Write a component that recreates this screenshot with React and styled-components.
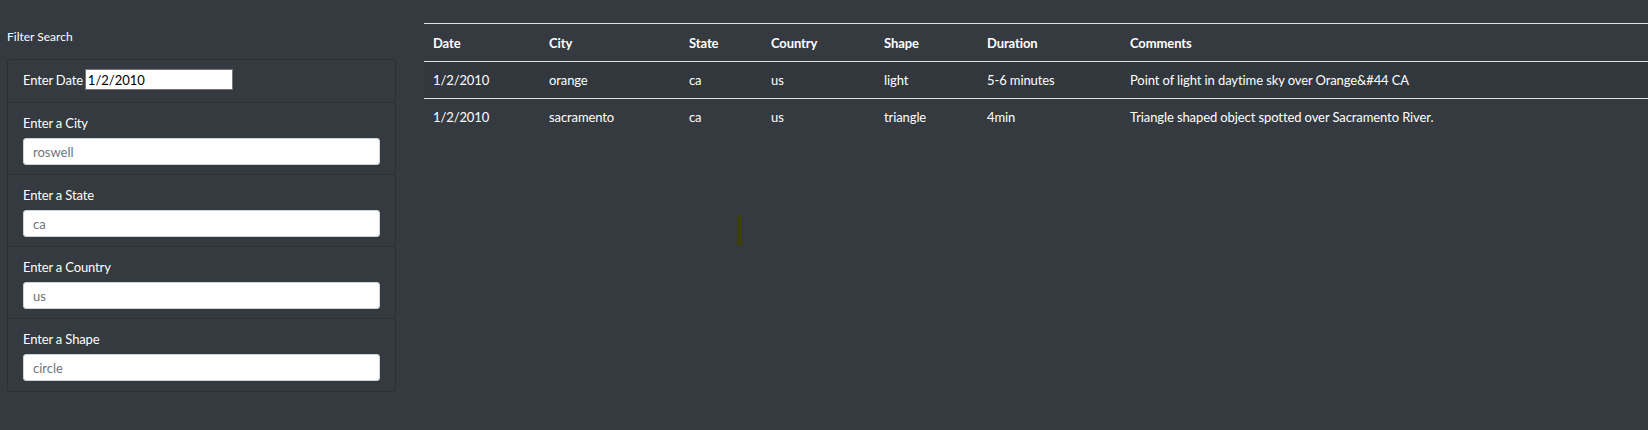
import styled, { createGlobalStyle } from 'styled-components';

const GlobalStyle = createGlobalStyle`
    html, body {
        margin: 0;
        padding: 0;
        background: #343a40;
        color: #fff;
        font-family: Lato, "Open Sans", sans-serif;
        font-size: 13px;
    }
`;

const Page = styled.div`
    display: flex;
    align-items: flex-start;
    padding-left: 7px;
    min-height: 430px;
    position: relative;
`;

const Sidebar = styled.aside`
    width: 389px;
    flex-shrink: 0;
    padding-top: 28px;
`;

const SidebarTitle = styled.div`
    font-size: 12px;
    line-height: 18px;
    margin-bottom: 13px;
`;

const FilterList = styled.ul`
    list-style: none;
    margin: 0;
    padding: 0;
    border: 1px solid #2b3035;
    border-radius: 3px;
`;

const FilterItem = styled.li`
    padding: ${({ inline }) => (inline ? '9px 15px 12px' : '11px 15px 9px')};
    border-top: ${({ first }) => (first ? 'none' : '1px solid #2b3035')};
    display: ${({ inline }) => (inline ? 'flex' : 'block')};
    align-items: center;
    gap: 2px;

    &:last-child {
        padding-bottom: 10px;
    }
`;

const Label = styled.label`
    display: block;
    font-size: 13px;
    line-height: 18px;
    letter-spacing: -0.15px;
    margin-bottom: ${({ inline }) => (inline ? '0' : '6px')};
`;

const DateInput = styled.input`
    width: 148px;
    height: 21px;
    box-sizing: border-box;
    border: 1px solid #767676;
    padding: 1px 2px;
    font-family: inherit;
    font-size: 13px;
    color: #000;
    background: #fff;
`;

const TextInput = styled.input`
    display: block;
    width: 100%;
    height: 27px;
    box-sizing: border-box;
    border: 1px solid #ced4da;
    border-radius: 3px;
    padding: 0 9px;
    font-family: inherit;
    font-size: 13px;
    background: #fff;

    &::placeholder {
        color: #6c757d;
    }
`;

const TableArea = styled.main`
    flex: 1;
    margin-left: 28px;
    padding-top: 23px;
`;

const Table = styled.table`
    width: 100%;
    border-collapse: collapse;
    table-layout: fixed;
    font-size: 13px;
    letter-spacing: -0.1px;
    color: #fff;
`;

const HeadCell = styled.th`
    text-align: left;
    font-weight: 700;
    padding: 1px 9px 0;
    height: 36px;
    border-top: 1px solid #dee2e6;
    border-bottom: 1px solid #dee2e6;
`;

const Row = styled.tr`
    background: ${({ striped }) => (striped ? 'rgba(0, 0, 0, 0.05)' : 'transparent')};
    border-bottom: ${({ last }) => (last ? 'none' : '1px solid #dee2e6')};
`;

const Cell = styled.td`
    padding: 0 9px;
    height: 36px;
    white-space: nowrap;
`;

const StrayBar = styled.div`
    position: absolute;
    left: 737px;
    top: 215px;
    width: 5px;
    height: 30px;
    background: #3d4100;
`;

const columns = [
    { key: 'date', label: 'Date', width: 116 },
    { key: 'city', label: 'City', width: 140 },
    { key: 'state', label: 'State', width: 82 },
    { key: 'country', label: 'Country', width: 113 },
    { key: 'shape', label: 'Shape', width: 103 },
    { key: 'duration', label: 'Duration', width: 143 },
    { key: 'comments', label: 'Comments' },
];

const sightings = [
    {
        date: '1/2/2010',
        city: 'orange',
        state: 'ca',
        country: 'us',
        shape: 'light',
        duration: '5-6 minutes',
        comments: 'Point of light in daytime sky over Orange&#44 CA',
    },
    {
        date: '1/2/2010',
        city: 'sacramento',
        state: 'ca',
        country: 'us',
        shape: 'triangle',
        duration: '4min',
        comments: 'Triangle shaped object spotted over Sacramento River.',
    },
];

const filters = [
    { id: 'city', label: 'Enter a City', placeholder: 'roswell' },
    { id: 'state', label: 'Enter a State', placeholder: 'ca' },
    { id: 'country', label: 'Enter a Country', placeholder: 'us' },
    { id: 'shape', label: 'Enter a Shape', placeholder: 'circle' },
];

const App = () => (
    <>
        <GlobalStyle />
        <Page>
            <Sidebar>
                <SidebarTitle>Filter Search</SidebarTitle>
                <FilterList>
                    <FilterItem first inline>
                        <Label inline htmlFor="datetime">Enter Date</Label>
                        <DateInput id="datetime" type="text" defaultValue="1/2/2010" />
                    </FilterItem>
                    {filters.map((f) => (
                        <FilterItem key={f.id}>
                            <Label htmlFor={f.id}>{f.label}</Label>
                            <TextInput id={f.id} type="text" placeholder={f.placeholder} />
                        </FilterItem>
                    ))}
                </FilterList>
            </Sidebar>
            <TableArea>
                <Table>
                    <colgroup>
                        {columns.map((c) => (
                            <col key={c.key} style={c.width ? { width: c.width } : undefined} />
                        ))}
                    </colgroup>
                    <thead>
                        <tr>
                            {columns.map((c) => (
                                <HeadCell key={c.key}>{c.label}</HeadCell>
                            ))}
                        </tr>
                    </thead>
                    <tbody>
                        {sightings.map((s, i) => (
                            <Row key={i} striped={i % 2 === 0} last={i === sightings.length - 1}>
                                {columns.map((c) => (
                                    <Cell key={c.key}>{s[c.key]}</Cell>
                                ))}
                            </Row>
                        ))}
                    </tbody>
                </Table>
            </TableArea>
            <StrayBar />
        </Page>
    </>
);

export default App;
